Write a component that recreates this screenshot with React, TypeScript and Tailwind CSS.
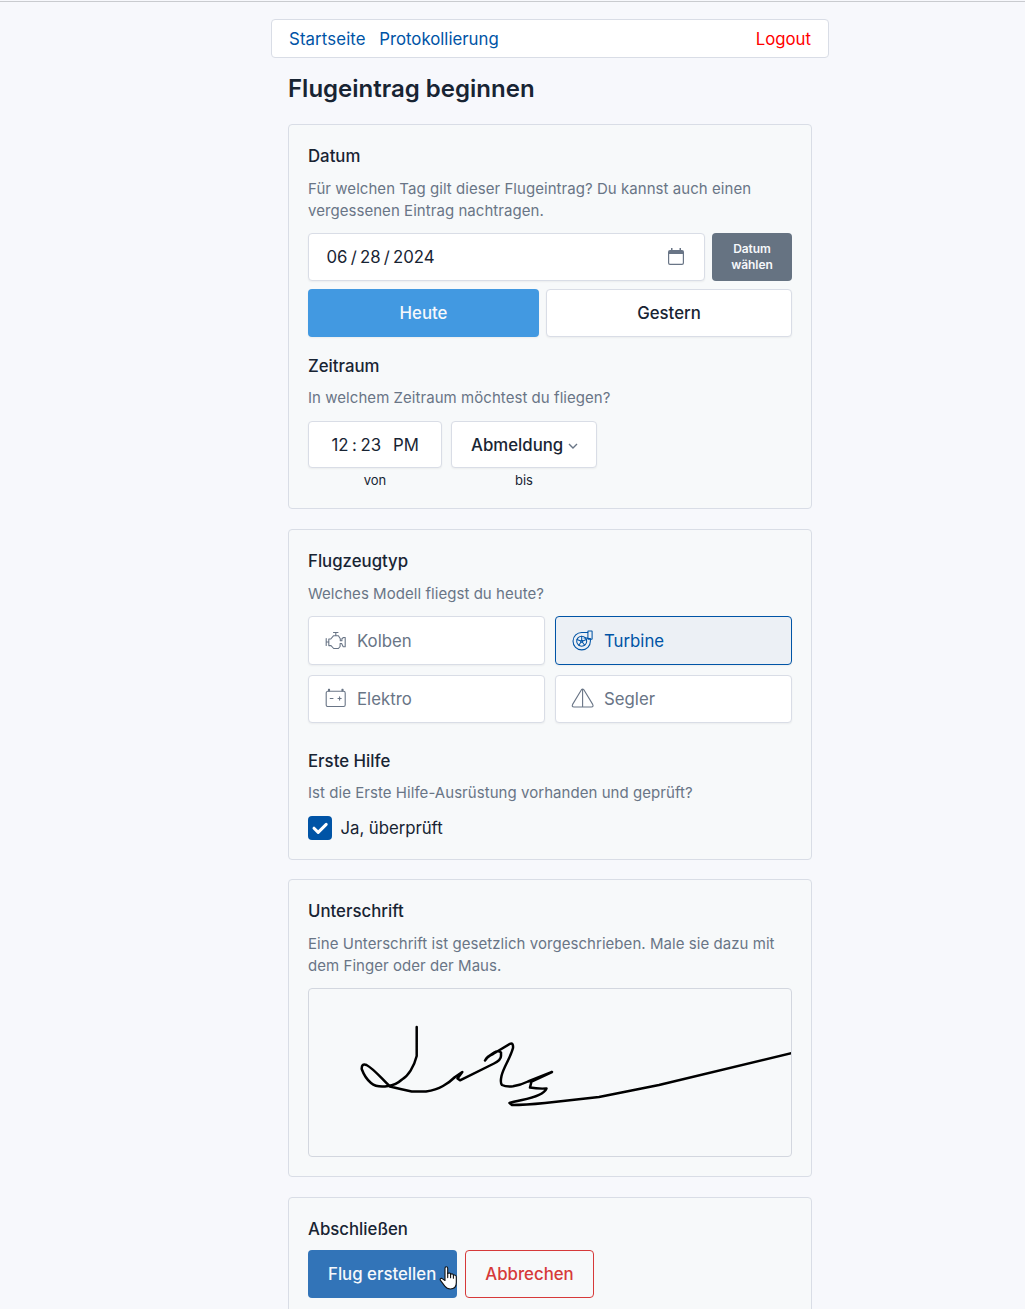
import React from "react";

const field = "rounded border border-[#d9dde6] bg-white shadow-[0_1px_2px_rgba(0,0,0,0.05)]";

function Card({ className, children }: { className: string; children: React.ReactNode }) {
  return (
    <section className={`rounded border border-[#d9dde6] bg-[#f7f9fa] px-[19px] ${className}`}>{children}</section>
  );
}

function Heading({ children }: { children: React.ReactNode }) {
  return <h2 className="text-[16.8px] leading-6 font-medium">{children}</h2>;
}

function Hint({ children }: { children: React.ReactNode }) {
  return <p className="text-[15px] leading-[22px] tracking-[0.05px] text-[#697586]">{children}</p>;
}

function PistonIcon() {
  return (
    <svg className="h-[22px] w-[22px]" viewBox="0 0 22 22" fill="none" stroke="currentColor" strokeWidth="1.1" strokeLinejoin="round" strokeLinecap="round">
      <path d="M8.5 2.5h4.500M10.800 2.500v3M1.200 8.500v7M1.200 12h2.600M3.800 9h2l2.600-3.200h5l1.900 2.900v2h1.600V8.700l1.600-1.200h1.700v9.200h-2l-1.600-3.200h-1.500v3l-1.700 2H8.700l-2.700-2.900H3.800z" />
    </svg>
  );
}

function TurbineIcon() {
  return (
    <svg className="h-[22px] w-[22px]" viewBox="0 0 22 22" fill="none" stroke="currentColor" strokeWidth="1.05" strokeLinejoin="round" strokeLinecap="round">
      <path d="M15.800 2.500H10A8.700 8.700 0 1 0 18.400 11V8.500h-2.600" />
      <rect x="15.900" y="1" width="4.200" height="8.200" rx=".3" />
      <circle cx="9.700" cy="11.200" r="5" />
      <circle cx="9.700" cy="11.200" r="1" />
      <path d="M9.700 10.200V6.300M10.700 10.900l3.700-1.300M10.300 12l2.400 3.200M9.100 12l-2.400 3.200M8.700 10.900l-3.700-1.300" />
      <path d="M12 8h3.800" />
    </svg>
  );
}

function BatteryIcon() {
  return (
    <svg className="h-[22px] w-[22px]" viewBox="0 0 22 22" fill="none" stroke="currentColor" strokeWidth="1.1" strokeLinecap="round" strokeLinejoin="round">
      <rect x="1.200" y="3.300" width="19" height="15.200" rx="1.600" />
      <path d="M3.500 3V1.300h1V3M17 3V1.300h1V3M5.200 10.500h2.800M13 10.500h3.200M14.600 8.900v3.200" />
    </svg>
  );
}

function GliderIcon() {
  return (
    <svg className="-ml-px h-[22px] w-[24px]" viewBox="0 0 24 22" fill="none" stroke="currentColor" strokeWidth="1.1" strokeLinejoin="round">
      <path d="M10.600 1.500 1.600 16.400q-1.200 2.600 1.300 2.600h17.500q2.500 0 1.300-2.600L12.700 1.500q-1-1.100-2.100 0zM11.600.800v18.200" />
    </svg>
  );
}

function Choice({ icon, label, active = false }: { icon: React.ReactNode; label: string; active?: boolean }) {
  const look = active
    ? "border-[#0054a6] bg-[#ecf0f5] text-[#0054a6]"
    : "border-[#d9dde6] bg-white text-[#697586]";
  return (
    <button className={`flex items-center rounded border pl-4 text-[16.8px] shadow-[0_1px_2px_rgba(0,0,0,0.05)] ${look}`}>
      <span className="flex w-8 shrink-0">{icon}</span>
      <span className="pt-0.5">{label}</span>
    </button>
  );
}

function HandCursor() {
  return (
    <svg className="absolute top-[15px] left-[131px] h-[26px] w-[19px]" viewBox="0 0 19 26" fill="#fff" stroke="#111" strokeWidth="1.1" strokeLinejoin="round" strokeLinecap="round">
      <path d="M6 15.5V3.2Q6 1.7 7.3 1.7T8.7 3.2V8.4Q11.3 7.4 11.6 9.2 14 8.3 14.4 10.2 17.3 9.5 17.3 12.3V17.5Q17.3 24 11.3 24 7.8 24 6 21.3L1.3 15.2Q.7 13.2 2.8 13.4L6 15.5" />
      <path d="M8.7 8.4v4.2M11.6 9.2v3.6M14.4 10.2v3" fill="none" />
    </svg>
  );
}

export default function App() {
  return (
    <div className="h-[1309px] overflow-hidden border-t border-[#f7f8fc] bg-[#f7f8fc] font-['Inter',sans-serif] text-[16.8px] text-[#182433]">
      <div className="h-px bg-[#c9cbcf]" />
      <div className="ml-[271px] w-[558px] pt-[17px]">
        <nav className="flex h-[39px] items-center rounded border border-[#d9dde6] bg-white px-[17px] pt-0.5 text-[#0054a6]">
          <a className="tracking-[0.12px]">Startseite</a>
          <a className="ml-[13.5px]">Protokollierung</a>
          <a className="ml-auto text-[#ff0000]">Logout</a>
        </nav>
        <main className="mx-[17px]">
          <h1 className="mt-[15px] text-2xl leading-8 font-semibold">Flugeintrag beginnen</h1>

          <Card className="mt-[19px] h-[385px] pt-[19px]">
            <Heading>Datum</Heading>
            <div className="mt-2.5">
              <Hint>
                Für welchen Tag gilt dieser Flugeintrag? Du kannst auch einen
                <br />
                vergessenen Eintrag nachtragen.
              </Hint>
            </div>
            <div className="mt-[11px] flex gap-[7px]">
              <div className={`flex h-12 w-[397px] items-center pr-[19px] pl-[17.5px] ${field}`}>
                <div className="flex pt-0.5">
                  <span>06</span>
                  <span className="mx-[3.2px]">/</span>
                  <span>28</span>
                  <span className="mx-[3.2px]">/</span>
                  <span>2024</span>
                </div>
                <svg className="ml-auto h-[18px] w-[18px] text-[#697586]" viewBox="0 0 18 18">
                  <path d="M4 0h1.500v3H4zM12.500 0H14v3h-1.500zM3 2h12q2 0 2 2v2H1V4q0-2 2-2z" fill="currentColor" />
                  <path d="M1.600 5v10q0 1.400 1.400 1.400h12q1.400 0 1.400-1.400V5" fill="none" stroke="currentColor" strokeWidth="1.200" />
                </svg>
              </div>
              <button className="h-12 w-20 rounded bg-[#667382] text-xs leading-4 font-semibold tracking-[-0.1px] text-[#f6f8fb]">
                Datum
                <br />
                wählen
              </button>
            </div>
            <div className="mt-2 flex gap-[7px]">
              <button className="h-12 w-[231px] rounded bg-[#4299e1] pt-0.5 font-medium text-[#f6f8fb] shadow-[0_1px_2px_rgba(0,0,0,0.05)]">Heute</button>
              <button className={`h-12 w-[246px] pt-0.5 font-medium ${field}`}>Gestern</button>
            </div>
            <div className="mt-[17px]">
              <Heading>Zeitraum</Heading>
            </div>
            <div className="mt-[9px]">
              <Hint>In welchem Zeitraum möchtest du fliegen?</Hint>
            </div>
            <div className="mt-3 flex gap-[9px] text-center text-[13px] leading-5">
              <div className="w-[134px]">
                <div className={`flex h-[47px] items-center pl-[22.5px] text-[16.8px] ${field}`}>
                  <span>12</span>
                  <span className="mx-[3.5px]">:</span>
                  <span>23</span>
                  <span className="ml-[12px]">PM</span>
                </div>
                <div className="mt-0.5">von</div>
              </div>
              <div className="w-[146px]">
                <button className={`flex h-[47px] w-full items-center pl-[19px] text-[16.8px] font-medium ${field}`}>
                  Abmeldung
                  <svg className="mt-[3px] ml-[5px] h-2.5 w-2.5 text-[#697586]" viewBox="0 0 10 10" fill="none" stroke="currentColor" strokeWidth="1.4">
                    <path d="m1 3 4 4 4-4" />
                  </svg>
                </button>
                <div className="mt-0.5">bis</div>
              </div>
            </div>
          </Card>

          <Card className="mt-5 h-[331px] pt-[19px]">
            <Heading>Flugzeugtyp</Heading>
            <div className="mt-2.5">
              <Hint>Welches Modell fliegst du heute?</Hint>
            </div>
            <div className="mt-[11px] grid grid-cols-2 grid-rows-[49px_48px] gap-2.5">
              <Choice icon={<PistonIcon />} label="Kolben" />
              <Choice icon={<TurbineIcon />} label="Turbine" active />
              <Choice icon={<BatteryIcon />} label="Elektro" />
              <Choice icon={<GliderIcon />} label="Segler" />
            </div>
            <div className="mt-[26px]">
              <Heading>Erste Hilfe</Heading>
            </div>
            <div className="mt-[9px]">
              <Hint>Ist die Erste Hilfe-Ausrüstung vorhanden und geprüft?</Hint>
            </div>
            <label className="mt-3 flex items-start">
              <span className="flex h-6 w-6 items-center justify-center rounded bg-[#0054a6]">
                <svg className="h-6 w-6" viewBox="0 0 24 24" fill="none" stroke="#fff" strokeWidth="3" strokeLinecap="round" strokeLinejoin="round">
                  <path d="m6 12.2 4.200 4.200 8-8" />
                </svg>
              </span>
              <span className="ml-[8.5px] leading-6 tracking-[-0.05px]">Ja, überprüft</span>
            </label>
          </Card>

          <Card className="mt-[19px] h-[298px] pt-[19px]">
            <Heading>Unterschrift</Heading>
            <div className="mt-2.5">
              <Hint>
                Eine Unterschrift ist gesetzlich vorgeschrieben. Male sie dazu mit
                <br />
                dem Finger oder der Maus.
              </Hint>
            </div>
            <div className="mt-[11px] h-[169px] rounded border border-[#d3d7df]">
              <svg className="h-[167px] w-[482px]" viewBox="309 989 482 167" fill="none" stroke="#000" strokeWidth="2.5" strokeLinecap="round" strokeLinejoin="round">
                <path d="M416.7 1027V1056C414 1067 408 1076 402 1079.500Q396 1085 388 1086Q377 1088 371 1083Q365 1078 361.700 1069Q361.500 1063 366.500 1065C374 1069 381 1078 390 1086.500Q400 1089 411.700 1091.500H426Q436 1090 443 1086Q450 1082 455 1077L462.300 1072L457.500 1078.500L460 1080.300L494 1063.500Q501 1060 501 1056V1052.500Q499 1050 494 1052.500T485 1060.500Q487 1056.500 493 1054L510 1043.800Q513.500 1042.500 513 1048C510 1059 503.500 1067 501.500 1076Q500 1083 502 1085Q506 1087 513 1086.300Q521 1085 528 1081.500L552 1072L531.500 1081.500L530 1087.500Q538 1089 546.500 1088.500C544 1094 532 1098 522 1100Q512 1102 509.500 1103L512 1105Q525 1105 545 1103L599 1097L659 1085L792 1053" />
              </svg>
            </div>
          </Card>

          <Card className="mt-5 h-[140px] pt-[19px]">
            <Heading>Abschließen</Heading>
            <div className="mt-[9px] flex gap-2">
              <button className="relative h-12 w-[149px] rounded bg-[#3274b8] pt-0.5 pl-5 text-left font-medium text-[#f6f8fb]">
                Flug erstellen
                <HandCursor />
              </button>
              <button className="h-12 w-[129px] rounded border border-[#d63939] pt-0.5 font-medium text-[#d63939]">Abbrechen</button>
            </div>
          </Card>
        </main>
      </div>
    </div>
  );
}
